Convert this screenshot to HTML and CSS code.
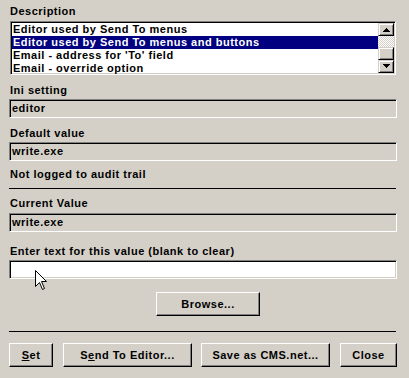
FILE: index.html
```html
<!DOCTYPE html>
<html>
<head>
<meta charset="utf-8">
<link rel="stylesheet" href="styles.css">
</head>
<body>
<div class="dlg">
  <div class="label l-desc">Description</div>
  <div class="listbox">
    <div class="rows">
      <div class="row">Editor used by Send To menus</div>
      <div class="row sel">Editor used by Send To menus and buttons</div>
      <div class="row">Email - address for 'To' field</div>
      <div class="row">Email - override option</div>
    </div>
    <div class="vscroll">
      <div class="sbtn"><svg width="7" height="4" viewBox="0 0 7 4"><path d="M3 0h1v1h1v1h1v1h1v1H0V3h1V2h1V1h1z" fill="#000"/></svg></div>
      <div class="track"></div>
      <div class="sbtn thumb"></div>
      <div class="sbtn"><svg width="7" height="4" viewBox="0 0 7 4"><path d="M0 0h7v1H6v1H5v1H4v1H3V3H2V2H1V1H0z" fill="#000"/></svg></div>
    </div>
  </div>
  <div class="label l-ini">Ini setting</div>
  <div class="field">editor</div>
  <div class="label l-def">Default value</div>
  <div class="field">write.exe</div>
  <div class="label l-note">Not logged to audit trail</div>
  <div class="sep sep1"></div>
  <div class="label l-cur">Current Value</div>
  <div class="field f-cur">write.exe</div>
  <div class="label l-enter">Enter text for this value (blank to clear)</div>
  <div class="field input"></div>
  <div class="browse-row"><button class="btn browse">Browse...</button></div>
  <div class="sep sep2"></div>
  <div class="actions">
    <button class="btn b-set"><u>S</u>et</button>
    <button class="btn b-send">S<u>e</u>nd To Editor...</button>
    <button class="btn b-save">Save as CMS.net...</button>
    <button class="btn b-close">Close</button>
  </div>
  <svg class="cursor" width="12" height="20" viewBox="0 0 12 20"><path d="M0.5 0.5V16.5L4.5 12.5L7.5 19.5L9.5 18.5L6.5 11.5H11.5Z" fill="#fff" stroke="#000" stroke-width="1"/></svg>
</div>
</body>
</html>
```
FILE: styles.css
```css
html, body {
  margin: 0;
  padding: 0;
  background: #d4d0c8;
}
.dlg {
  position: relative;
  width: 409px;
  height: 378px;
  box-sizing: border-box;
  padding: 0 12px 0 9px;
  display: flex;
  flex-direction: column;
  font-family: "Liberation Sans", Arial, sans-serif;
  font-weight: bold;
  font-size: 11px;
  letter-spacing: 0.5px;
  color: #000;
}
.label {
  line-height: 13px;
  height: 13px;
  padding-left: 1px;
  white-space: nowrap;
}
.l-desc { margin-top: 5px; }
.l-ini { margin-top: 9px; }
.l-def { margin-top: 9px; }
.l-note { margin-top: 7px; }
.l-cur { margin-top: 8px; }
.l-enter { margin-top: 13px; }

.listbox {
  margin: 3px 1px 0 1px;
  height: 54px;
  box-sizing: border-box;
  border: 1px solid;
  border-color: #808080 #fff #fff #808080;
  box-shadow: inset 1px 1px #000, inset -1px -1px #d4d0c8;
  background: #fff;
  display: flex;
  padding: 1px;
}
.rows {
  flex: 1;
  min-width: 0;
}
.row {
  height: 13px;
  line-height: 13px;
  padding-left: 1px;
  white-space: nowrap;
}
.row.sel {
  background: #000080;
  color: #fff;
}
.vscroll {
  width: 16px;
  display: flex;
  flex-direction: column;
}
.sbtn {
  height: 14px;
  box-sizing: border-box;
  background: #d4d0c8;
  border: 1px solid;
  border-color: #d4d0c8 #000 #000 #d4d0c8;
  box-shadow: inset 1px 1px #fff, inset -1px -1px #808080;
  display: flex;
  align-items: center;
  justify-content: center;
}
.track {
  height: 11px;
  background: repeating-conic-gradient(#fff 0 25%, #d4d0c8 0 50%) 0 0 / 2px 2px;
}
.thumb { height: 13px; }

.field {
  margin-top: 2px;
  height: 19px;
  box-sizing: border-box;
  border: 1px solid;
  border-color: #808080 #fff #fff #808080;
  box-shadow: inset 1px 1px #000, inset -1px -1px #d4d0c8;
  padding: 0 0 0 2px;
  line-height: 17px;
  white-space: nowrap;
}
.f-cur { margin-top: 3px; }
.field.input { background: #fff; }

.sep {
  height: 1px;
  background: #000;
  margin-right: 1px;
}
.sep1 { margin-top: 7px; }
.sep2 { margin-top: 15px; }

.btn {
  font: inherit;
  letter-spacing: inherit;
  color: #000;
  height: 24px;
  box-sizing: border-box;
  background: #d4d0c8;
  border: 1px solid;
  border-color: #fff #000 #000 #fff;
  box-shadow: inset -1px -1px #808080, inset 1px 1px #d4d0c8;
  padding: 0;
  margin: 0;
  line-height: 20px;
  text-align: center;
}
.browse-row {
  margin-top: 13px;
  display: flex;
  padding-left: 147px;
}
.browse { width: 104px; }

.actions {
  margin-top: 11px;
  display: flex;
}
.b-set { width: 44px; }
.b-send { width: 129px; margin-left: 10px; }
.b-save { width: 129px; margin-left: 9px; }
.b-close { width: 57px; margin-left: 10px; }

.cursor {
  position: absolute;
  left: 35px;
  top: 270px;
}
```
